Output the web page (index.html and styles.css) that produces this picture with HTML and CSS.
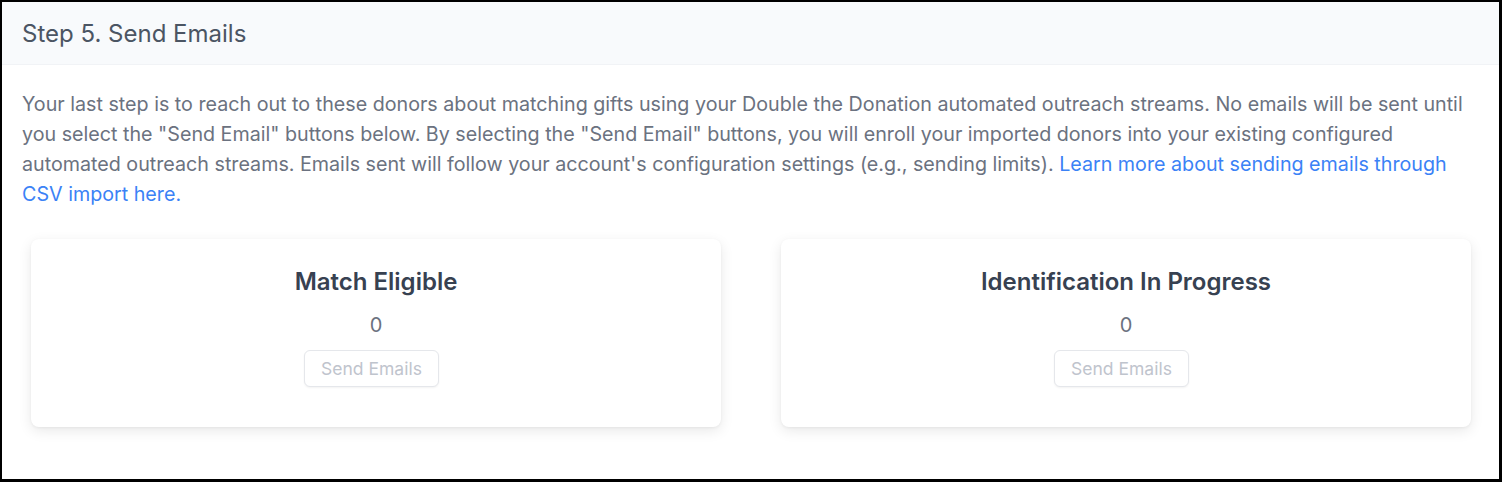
FILE: index.html
```html
<!DOCTYPE html>
<html>
<head>
<meta charset="utf-8">
<link rel="stylesheet" href="styles.css">
</head>
<body>
<div class="frame">
  <div class="header">Step 5. Send Emails</div>
  <div class="content">
    <p class="intro">Your last step is to reach out to these donors about matching gifts using your Double the Donation automated outreach streams. No emails will be sent until you select the "Send Email" buttons below. By selecting the "Send Email" buttons, you will enroll your imported donors into your existing configured automated outreach streams. Emails sent will follow your account's configuration settings (e.g., sending limits). <a class="link" href="#">Learn more about sending emails through CSV import here.</a></p>
    <div class="cards">
      <div class="card">
        <div class="card-title">Match Eligible</div>
        <div class="card-count">0</div>
        <button class="btn" disabled>Send Emails</button>
      </div>
      <div class="card">
        <div class="card-title">Identification In Progress</div>
        <div class="card-count">0</div>
        <button class="btn" disabled>Send Emails</button>
      </div>
    </div>
  </div>
</div>
</body>
</html>
```
FILE: styles.css
```css
html, body {
  margin: 0;
  padding: 0;
  background: #fff;
}
.frame {
  box-sizing: border-box;
  width: 1502px;
  height: 482px;
  border-style: solid;
  border-color: #000;
  border-width: 2px 3px 3px 2px;
  font-family: Inter, "Noto Sans", sans-serif;
  background: #fff;
  overflow: hidden;
}
.header {
  height: 63px;
  box-sizing: border-box;
  background: #f8fafc;
  padding: 0 20px;
  display: flex;
  align-items: center;
  font-size: 24px;
  color: #4b5563;
  border-bottom: 1px solid #f1f3f6;
}
.content {
  padding: 24px 20px 0 20px;
}
.intro {
  margin: 0;
  font-size: 19.7px;
  line-height: 30px;
  color: #6b7280;
}
.link {
  color: #3b82f6;
  text-decoration: none;
}
.cards {
  display: grid;
  grid-template-columns: 1fr 1fr;
  gap: 60px;
  padding: 30px 8px 0 9px;
}
.card {
  height: 188px;
  box-sizing: border-box;
  background: #fff;
  border-radius: 8px;
  box-shadow: 0 4px 14px rgba(0, 0, 0, 0.09), 0 1px 3px rgba(0, 0, 0, 0.05);
  display: flex;
  flex-direction: column;
  align-items: center;
  padding-top: 28px;
}
.card-title {
  font-size: 24px;
  font-weight: 600;
  color: #374151;
  line-height: 30px;
}
.card-count {
  margin-top: 16px;
  font-size: 20px;
  color: #6b7280;
  line-height: 24px;
}
.btn {
  margin-top: 13px;
  margin-right: 9px;
  height: 37px;
  width: 135px;
  padding: 0;
  background: #fff;
  border: 1px solid #e5e7eb;
  border-radius: 6px;
  box-shadow: 0 1px 2px rgba(0, 0, 0, 0.05);
  font-family: Inter, "Noto Sans", sans-serif;
  font-size: 17.5px;
  color: #bfc4cd;
}
```
